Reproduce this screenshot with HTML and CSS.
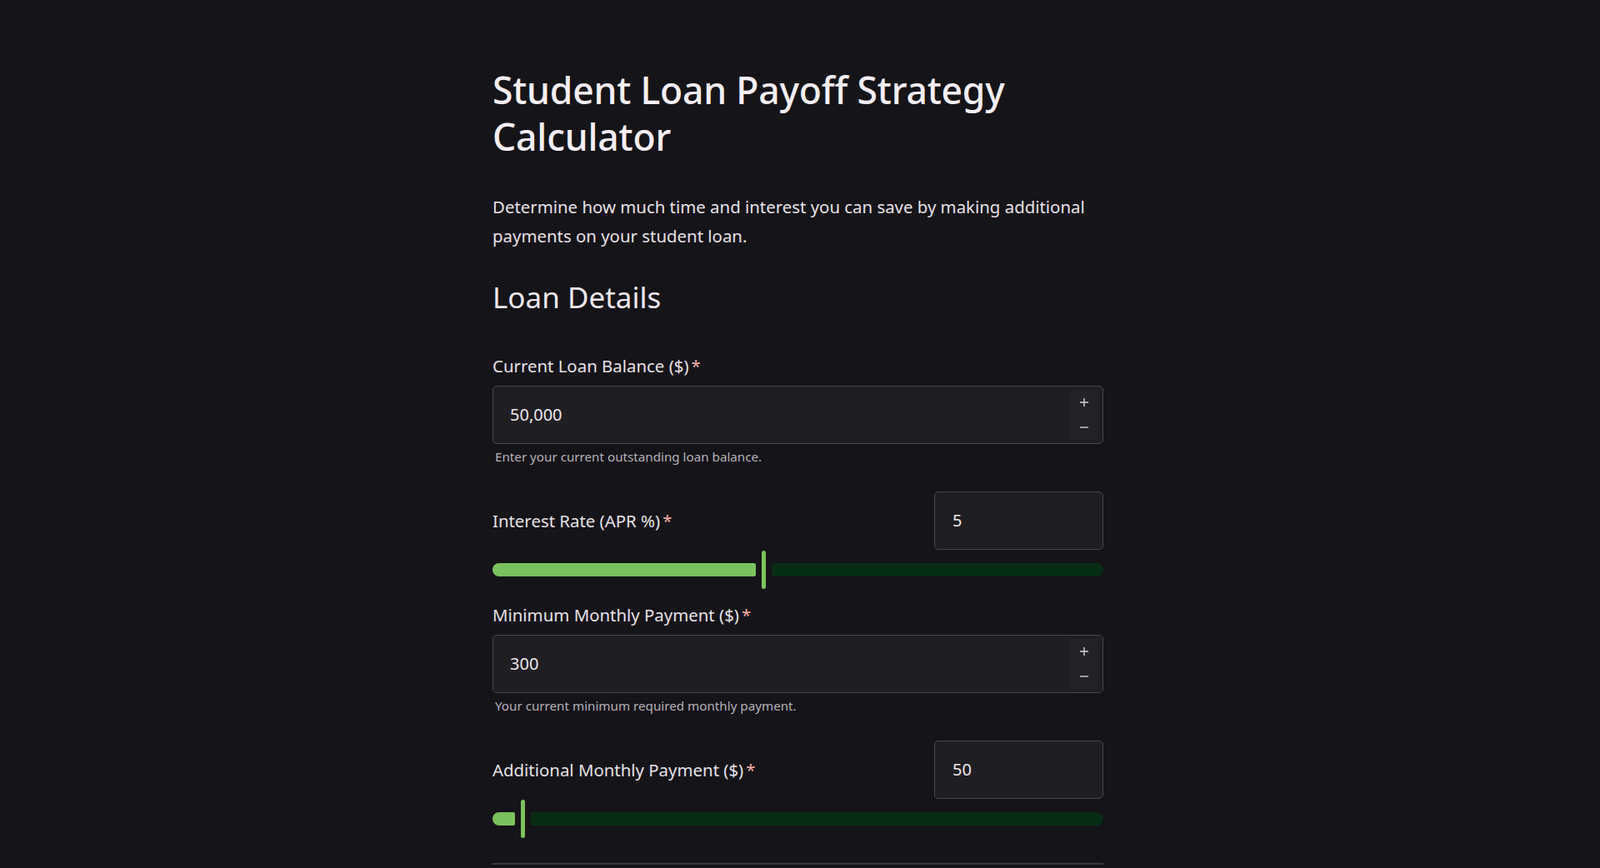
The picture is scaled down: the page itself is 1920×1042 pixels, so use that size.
FILE: index.html
```html
<!DOCTYPE html>
<html lang="en">
<head>
<meta charset="utf-8">
<title>Student Loan Payoff Strategy Calculator</title>
<link rel="stylesheet" href="styles.css">
</head>
<body>
<main class="page">
  <h1 class="title">Student Loan Payoff Strategy Calculator</h1>
  <p class="intro">Determine how much time and interest you can save by making additional payments on your student loan.</p>
  <h2 class="section-title">Loan Details</h2>

  <div class="field field-first">
    <label class="label">Current Loan Balance ($)<span class="req">*</span></label>
    <div class="number-box">
      <input class="number-input" type="text" value="50,000">
      <div class="stepper">
        <button class="step-btn" type="button" aria-label="Increase">
          <svg width="12" height="12" viewBox="0 0 12 12"><path d="M6 1v10M1 6h10" stroke="#d6d2d8" stroke-width="1.4" fill="none"/></svg>
        </button>
        <button class="step-btn" type="button" aria-label="Decrease">
          <svg width="12" height="12" viewBox="0 0 12 12"><path d="M1 6h10" stroke="#d6d2d8" stroke-width="1.4" fill="none"/></svg>
        </button>
      </div>
    </div>
    <div class="helper">Enter your current outstanding loan balance.</div>
  </div>

  <div class="field field-slider">
    <div class="slider-head">
      <label class="label">Interest Rate (APR %)<span class="req">*</span></label>
      <div class="small-box"><input class="number-input" type="text" value="5"></div>
    </div>
    <div class="slider">
      <div class="track-active" style="width:316px"></div>
      <div class="handle"></div>
      <div class="track-inactive"></div>
    </div>
  </div>

  <div class="field field-after-slider">
    <label class="label">Minimum Monthly Payment ($)<span class="req">*</span></label>
    <div class="number-box">
      <input class="number-input" type="text" value="300">
      <div class="stepper">
        <button class="step-btn" type="button" aria-label="Increase">
          <svg width="12" height="12" viewBox="0 0 12 12"><path d="M6 1v10M1 6h10" stroke="#d6d2d8" stroke-width="1.4" fill="none"/></svg>
        </button>
        <button class="step-btn" type="button" aria-label="Decrease">
          <svg width="12" height="12" viewBox="0 0 12 12"><path d="M1 6h10" stroke="#d6d2d8" stroke-width="1.4" fill="none"/></svg>
        </button>
      </div>
    </div>
    <div class="helper">Your current minimum required monthly payment.</div>
  </div>

  <div class="field field-slider">
    <div class="slider-head">
      <label class="label">Additional Monthly Payment ($)<span class="req">*</span></label>
      <div class="small-box"><input class="number-input" type="text" value="50"></div>
    </div>
    <div class="slider">
      <div class="track-active" style="width:27px"></div>
      <div class="handle"></div>
      <div class="track-inactive"></div>
    </div>
  </div>

  <hr class="divider">
</main>
</body>
</html>
```

FILE: styles.css
```css
html, body {
  margin: 0;
  padding: 0;
  background: #151418;
}

body {
  display: flex;
  justify-content: center;
  padding-right: 5px;
  font-family: "Noto Sans", "DejaVu Sans", sans-serif;
  color: #e6e1e6;
  min-height: 1042px;
  overflow: hidden;
}

.page {
  width: 733px;
  padding-top: 80px;
}

.title {
  margin: 0;
  font-size: 44.5px;
  line-height: 56px;
  font-weight: 500;
  color: #f5eff6;
  letter-spacing: -0.2px;
}

.intro {
  margin: 38.5px 0 0;
  font-size: 20.4px;
  line-height: 35px;
  color: #e6e1e6;
}

.section-title {
  margin: 35px 0 0;
  font-size: 35px;
  line-height: 42px;
  font-weight: 400;
  color: #ede8ee;
}

.field-first {
  margin-top: 46px;
}

.field-slider {
  margin-top: 31px;
}

.field-after-slider {
  margin-top: 16px;
}

.label {
  display: block;
  font-size: 20.4px;
  line-height: 30px;
  color: #e6e1e6;
}

.req {
  color: #f0aca5;
  margin-left: 3px;
}

.number-box {
  margin-top: 9px;
  height: 70px;
  box-sizing: border-box;
  border: 1px solid #4a484e;
  border-radius: 5px;
  background: #1f1e22;
  display: flex;
  align-items: center;
  padding: 4px 5px 4px 20px;
}

.number-input {
  flex: 1;
  min-width: 0;
  border: 0;
  outline: 0;
  background: transparent;
  padding: 0;
  font-family: "Noto Sans", "DejaVu Sans", sans-serif;
  font-size: 20px;
  color: #ece7ec;
}

.stepper {
  display: flex;
  flex-direction: column;
  align-self: stretch;
  width: 34px;
  border-radius: 3px;
  background: #242327;
}

.step-btn {
  flex: 1;
  display: flex;
  align-items: center;
  justify-content: center;
  border: 0;
  padding: 0;
  background: transparent;
}

.helper {
  margin-top: 5px;
  margin-left: 3px;
  font-size: 15.2px;
  line-height: 21px;
  color: #b6b1b8;
}

.slider-head {
  display: flex;
  align-items: center;
  justify-content: space-between;
}

.small-box {
  width: 203px;
  height: 70px;
  box-sizing: border-box;
  border: 1px solid #4a484e;
  border-radius: 5px;
  background: #1f1e22;
  display: flex;
  align-items: center;
  padding-left: 21px;
}

.slider {
  margin-top: 1px;
  height: 46px;
  display: flex;
  align-items: center;
}

.track-active {
  height: 16px;
  background: #7ac25d;
  border-radius: 8px 2px 2px 8px;
}

.handle {
  width: 5px;
  height: 46px;
  margin: 0 7px;
  border-radius: 3px;
  background: #7ac25d;
}

.track-inactive {
  flex: 1;
  height: 16px;
  background: #082d15;
  border-radius: 2px 8px 8px 2px;
}

.divider {
  margin: 30px 0 0;
  border: 0;
  border-top: 2px solid #3a393e;
}
```
